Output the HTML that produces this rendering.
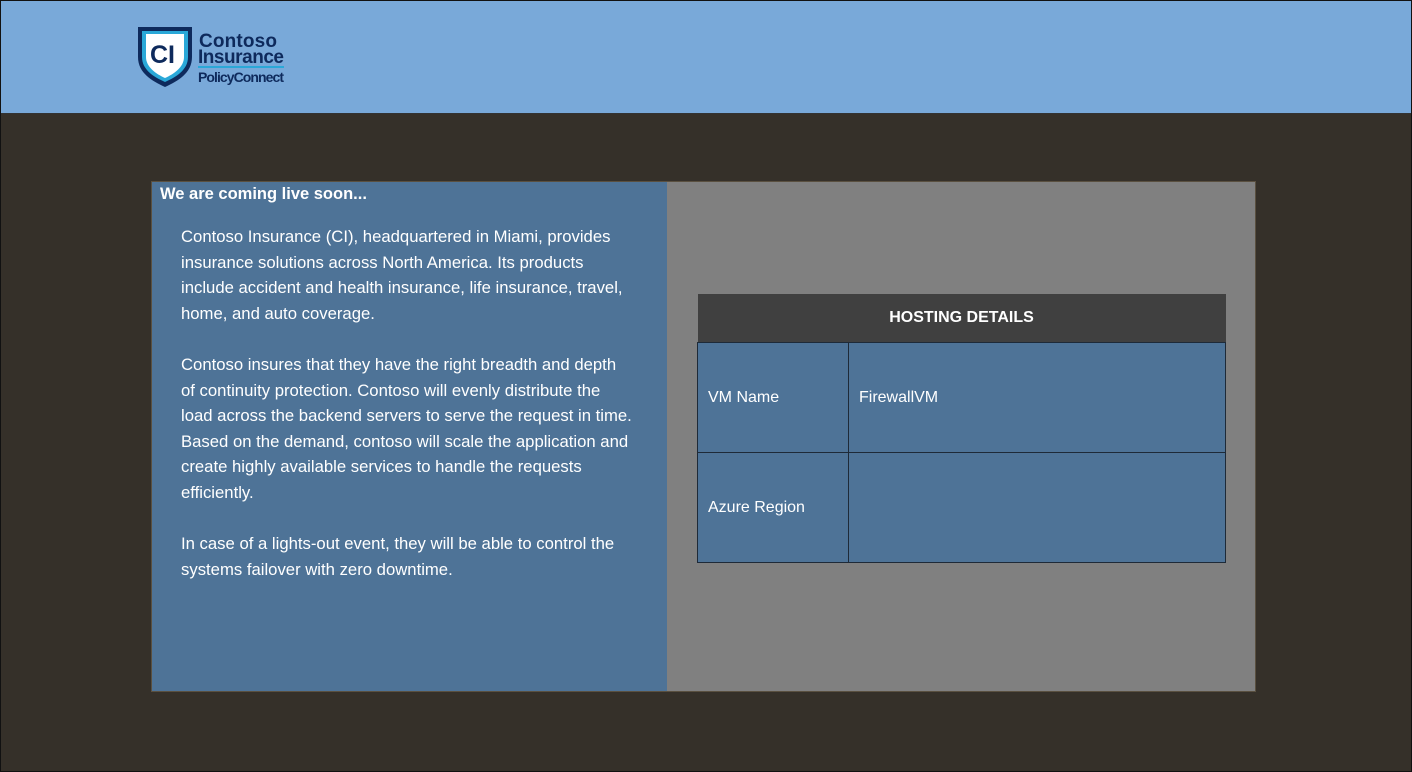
<!DOCTYPE html>
<html><head><style>
body{margin:0;width:1412px;height:772px;overflow:hidden;background:#353029;font-family:"Liberation Sans",sans-serif;}
.frame{position:absolute;left:0;top:0;width:1410px;height:770px;border:1px solid #111;}
.hdr{position:absolute;left:1px;top:1px;width:1410px;height:112px;background:#79a9d9;border-bottom:1px solid #333;}
.left{position:absolute;left:151px;top:181px;width:515px;height:509px;background:#4e7397;border:1px solid #5a5040;border-right:1px solid #3a6da0;color:#fff;}
.right{position:absolute;left:667px;top:181px;width:588px;height:509px;background:#808080;border:1px solid #5a5040;border-left:none;}
h1{margin:0;position:absolute;left:8px;top:3px;font-size:16.5px;font-weight:bold;}
.txt{position:absolute;left:29px;top:42px;width:480px;font-size:16.7px;line-height:25.6px;white-space:nowrap;}
.txt p{margin:0 0 25.6px 0;}
table{position:absolute;left:30px;top:112px;width:529px;border-collapse:collapse;color:#fff;font-size:16px;}
th{background:#404040;height:48px;font-size:16px;padding:0;}
td{background:#4e7397;border:1px solid #1e2a38;height:109px;padding:0 0 0 10px;}
</style></head><body>
<div class="frame"></div>
<div class="hdr">
<svg style="position:absolute;left:135px;top:24px" width="160" height="64" viewBox="0 0 160 64">
<path d="M2 2 H56 V32 C56 48 42 56 29 62 C16 56 2 48 2 32 Z" fill="#0e2a5c"/>
<path d="M6 6 H52 V32 C52 45 40 52 29 57 C18 52 6 45 6 32 Z" fill="#2aa8d8"/>
<path d="M10 9 H48 V32 C48 42 38 49 29 53 C20 49 10 42 10 32 Z" fill="#fff"/>
<text x="14" y="38" font-family="Liberation Sans" font-weight="bold" font-size="25" fill="#0e2a5c">CI</text>
<text x="63" y="22" font-family="Liberation Sans Narrow,Liberation Sans" font-weight="bold" font-size="19" fill="#0e2a5c" textLength="78">Contoso</text>
<text x="62" y="38" font-family="Liberation Sans Narrow,Liberation Sans" font-weight="bold" font-size="19" fill="#0e2a5c" textLength="86">Insurance</text>
<rect x="62" y="41" width="86" height="2" fill="#2aa8d8"/>
<text x="62" y="57" font-family="Liberation Sans Narrow,Liberation Sans" font-weight="bold" font-size="14" fill="#0e2a5c" textLength="86">PolicyConnect</text>
</svg>
</div>
<div class="left">
<h1>We are coming live soon...</h1>
<div class="txt">
<p>Contoso Insurance (CI), headquartered in Miami, provides<br>insurance solutions across North America. Its products<br>include accident and health insurance, life insurance, travel,<br>home, and auto coverage.</p>
<p>Contoso insures that they have the right breadth and depth<br>of continuity protection. Contoso will evenly distribute the<br>load across the backend servers to serve the request in time.<br>Based on the demand, contoso will scale the application and<br>create highly available services to handle the requests<br>efficiently.</p>
<p>In case of a lights-out event, they will be able to control the<br>systems failover with zero downtime.</p>
</div>
</div>
<div class="right">
<table>
<tr><th colspan="2">HOSTING DETAILS</th></tr>
<tr><td style="width:140px">VM Name</td><td>FirewallVM</td></tr>
<tr><td>Azure Region</td><td></td></tr>
</table>
</div>
</body></html>
